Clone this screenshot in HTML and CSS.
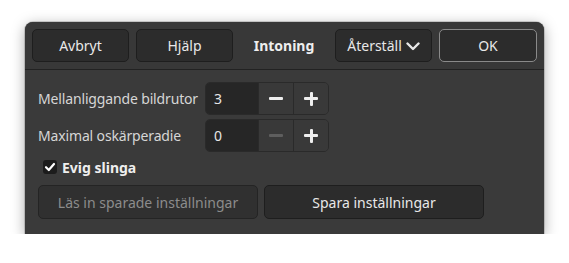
FILE: index.html
```html
<!DOCTYPE html>
<html lang="sv">
<head>
<meta charset="utf-8">
<title>Intoning</title>
<link rel="stylesheet" href="styles.css">
</head>
<body>
<div class="dialog">
  <div class="header">
    <button class="btn hbtn">Avbryt</button>
    <button class="btn hbtn">Hjälp</button>
    <div class="title">Intoning</div>
    <button class="btn hbtn reset">Återställ
      <svg class="chev" width="14" height="10" viewBox="0 0 14 10"><path d="M1.5 2.5 L7 8 L12.5 2.5" fill="none" stroke="#e8e8e8" stroke-width="2.4" stroke-linecap="round" stroke-linejoin="round"/></svg>
    </button>
    <button class="btn hbtn ok">OK</button>
  </div>
  <div class="content">
    <div class="grid">
      <div class="label">Mellanliggande bildrutor</div>
      <div class="spin">
        <div class="entry">3</div>
        <div class="sbtn"><span class="minus"></span></div>
        <div class="sbtn"><span class="plus"></span></div>
      </div>
      <div class="label">Maximal oskärperadie</div>
      <div class="spin">
        <div class="entry">0</div>
        <div class="sbtn disabled"><span class="minus"></span></div>
        <div class="sbtn"><span class="plus"></span></div>
      </div>
    </div>
    <div class="check-row">
      <span class="checkbox"><svg width="14" height="14" viewBox="0 0 14 14"><path d="M3 7.2 L5.8 10 L11 4" fill="none" stroke="#fff" stroke-width="2.2" stroke-linecap="round" stroke-linejoin="round"/></svg></span>
      <span class="check-label">Evig slinga</span>
    </div>
    <div class="actions">
      <button class="btn abtn disabled">Läs in sparade inställningar</button>
      <button class="btn abtn">Spara inställningar</button>
    </div>
  </div>
</div>
</body>
</html>
```
FILE: styles.css
```css
html, body {
  margin: 0;
  padding: 0;
  background: #ffffff;
}
body {
  font-family: "Noto Sans", "Open Sans", sans-serif;
  font-size: 14px;
  color: #dcdcdc;
}
.dialog {
  margin: 22px 0 0 25px;
  width: 519px;
  background: #3a3a3a;
  border-radius: 8px 8px 0 0;
  box-shadow: 0 3px 14px rgba(0, 0, 0, 0.35), 0 0 0 1px rgba(0, 0, 0, 0.15);
}
.header {
  display: flex;
  align-items: center;
  gap: 7px;
  padding: 7px;
  background: #383838;
  border-bottom: 1px solid #222222;
  border-radius: 8px 8px 0 0;
}
.btn {
  font-family: inherit;
  font-size: 14px;
  color: #e8e8e8;
  background: #2c2c2c;
  border: 1px solid #1e1e1e;
  border-radius: 5px;
  height: 33px;
  padding: 0 10px;
  display: flex;
  align-items: center;
  justify-content: center;
  cursor: default;
}
.hbtn {
  width: 97px;
}
.title {
  flex: 1;
  text-align: center;
  font-weight: bold;
  color: #eeeeee;
}
.reset {
  gap: 4px;
}
.chev {
  margin-top: 1px;
}
.ok {
  width: 98px;
  border-color: #8a8a8a;
}
.content {
  padding: 12px 13px 15px 13px;
}
.grid {
  display: grid;
  grid-template-columns: 160px auto;
  justify-content: start;
  column-gap: 7px;
  row-gap: 4px;
  align-items: center;
}
.label {
  color: #d6d6d6;
  white-space: nowrap;
  letter-spacing: -0.15px;
}
.spin {
  display: flex;
  height: 33px;
  border: 1px solid #2a2a2a;
  border-radius: 5px;
  overflow: hidden;
  box-sizing: border-box;
}
.entry {
  width: 52px;
  background: #262626;
  color: #e6e6e6;
  display: flex;
  align-items: center;
  padding-left: 8px;
  box-sizing: border-box;
}
.sbtn {
  width: 35px;
  box-sizing: border-box;
  display: flex;
  align-items: center;
  justify-content: center;
  background: #393939;
  border-left: 1px solid #2a2a2a;
}
.minus {
  display: block;
  width: 14px;
  height: 3px;
  background: #eeeeee;
  border-radius: 1px;
}
.plus {
  display: block;
  width: 14px;
  height: 14px;
  position: relative;
}
.plus::before, .plus::after {
  content: "";
  position: absolute;
  background: #eeeeee;
  border-radius: 1px;
}
.plus::before {
  left: 0;
  top: 5.5px;
  width: 14px;
  height: 3px;
}
.plus::after {
  left: 5.5px;
  top: 0;
  width: 3px;
  height: 14px;
}
.sbtn.disabled .minus {
  background: #5e5e5e;
}
.check-row {
  display: flex;
  align-items: center;
  gap: 5px;
  height: 22px;
  margin-top: 4px;
  padding-left: 5px;
}
.checkbox {
  width: 14px;
  height: 14px;
  background: #1c1c1c;
  border-radius: 3px;
  display: flex;
}
.check-label {
  font-weight: bold;
  color: #eeeeee;
}
.actions {
  display: flex;
  gap: 6px;
  margin-top: 7px;
}
.abtn {
  height: 34px;
  width: 220px;
}
.abtn.disabled {
  color: #8c8c8c;
  background: #303030;
  border-color: #242424;
}
```
